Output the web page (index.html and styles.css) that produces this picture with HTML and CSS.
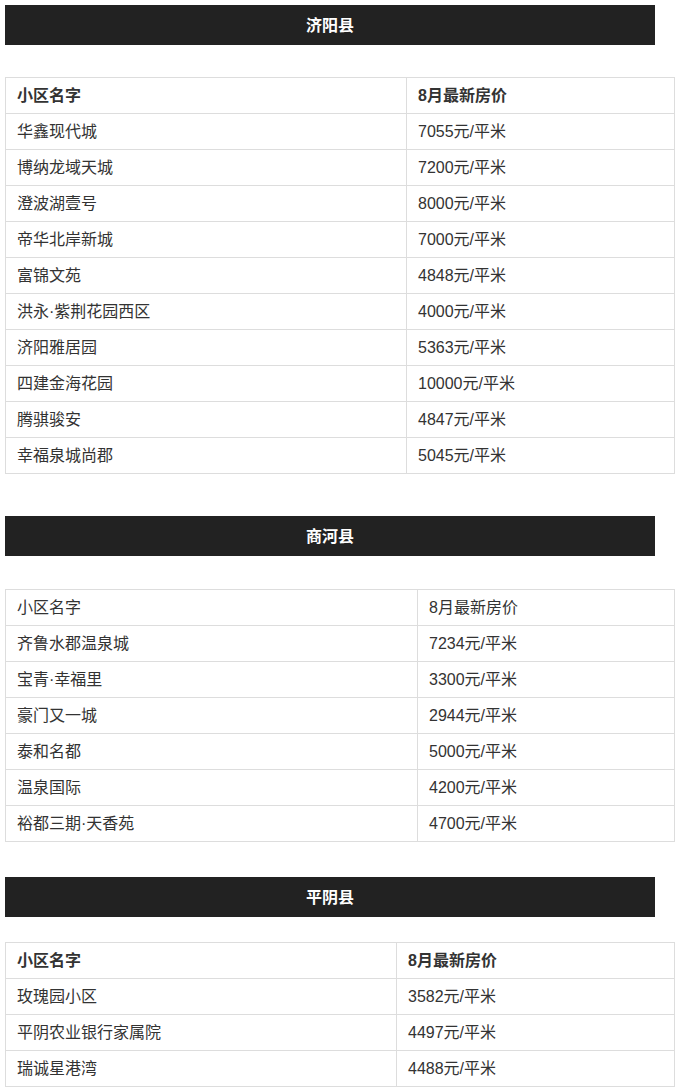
FILE: index.html
```html
<!DOCTYPE html>
<html lang="zh">
<head>
<meta charset="utf-8">
<link rel="stylesheet" href="styles.css">
</head>
<body>
<div class="page">
  <section class="sec sec-1">
    <h2 class="bar">济阳县</h2>
    <table class="tbl tbl-1">
      <tr class="head"><td class="c1">小区名字</td><td>8月最新房价</td></tr>
      <tr><td class="c1">华鑫现代城</td><td>7055元/平米</td></tr>
      <tr><td class="c1">博纳龙域天城</td><td>7200元/平米</td></tr>
      <tr><td class="c1">澄波湖壹号</td><td>8000元/平米</td></tr>
      <tr><td class="c1">帝华北岸新城</td><td>7000元/平米</td></tr>
      <tr><td class="c1">富锦文苑</td><td>4848元/平米</td></tr>
      <tr><td class="c1">洪永·紫荆花园西区</td><td>4000元/平米</td></tr>
      <tr><td class="c1">济阳雅居园</td><td>5363元/平米</td></tr>
      <tr><td class="c1">四建金海花园</td><td>10000元/平米</td></tr>
      <tr><td class="c1">腾骐骏安</td><td>4847元/平米</td></tr>
      <tr><td class="c1">幸福泉城尚郡</td><td>5045元/平米</td></tr>
    </table>
  </section>
  <section class="sec sec-2">
    <h2 class="bar">商河县</h2>
    <table class="tbl tbl-2">
      <tr><td class="c1">小区名字</td><td>8月最新房价</td></tr>
      <tr><td class="c1">齐鲁水郡温泉城</td><td>7234元/平米</td></tr>
      <tr><td class="c1">宝青·幸福里</td><td>3300元/平米</td></tr>
      <tr><td class="c1">豪门又一城</td><td>2944元/平米</td></tr>
      <tr><td class="c1">泰和名都</td><td>5000元/平米</td></tr>
      <tr><td class="c1">温泉国际</td><td>4200元/平米</td></tr>
      <tr><td class="c1">裕都三期·天香苑</td><td>4700元/平米</td></tr>
    </table>
  </section>
  <section class="sec sec-3">
    <h2 class="bar">平阴县</h2>
    <table class="tbl tbl-3">
      <tr class="head"><td class="c1">小区名字</td><td>8月最新房价</td></tr>
      <tr><td class="c1">玫瑰园小区</td><td>3582元/平米</td></tr>
      <tr><td class="c1">平阴农业银行家属院</td><td>4497元/平米</td></tr>
      <tr><td class="c1">瑞诚星港湾</td><td>4488元/平米</td></tr>
    </table>
  </section>
</div>
</body>
</html>
```

FILE: styles.css
```css
html, body {
  margin: 0;
  padding: 0;
  background: #fff;
}
.page {
  padding: 5px 6px 0 5px;
  font-family: "Liberation Sans", "Noto Sans CJK SC", sans-serif;
  color: #333;
  font-size: 16px;
}
.sec {
  display: flex;
  flex-direction: column;
}
.bar {
  margin: 0;
  width: 650px;
  height: 40px;
  background: #222;
  color: #fff;
  font-family: "Noto Sans CJK SC", sans-serif;
  font-size: 16px;
  font-weight: 700;
  line-height: 38px;
  text-align: center;
}
.tbl {
  width: 670px;
  border-collapse: collapse;
  table-layout: fixed;
}
.tbl td {
  border: 1px solid #ddd;
  padding: 0 11px;
  height: 35px;
  line-height: 20px;
  vertical-align: middle;
}
.head td {
  font-weight: 700;
}
.sec-1 .tbl { margin-top: 32px; }
.sec-2 { margin-top: 42px; }
.sec-2 .tbl { margin-top: 33px; }
.sec-3 { margin-top: 35px; }
.sec-3 .tbl { margin-top: 25px; }
.tbl-1 .c1 { width: 378px; }
.tbl-2 .c1 { width: 389px; }
.tbl-3 .c1 { width: 368px; }
```
